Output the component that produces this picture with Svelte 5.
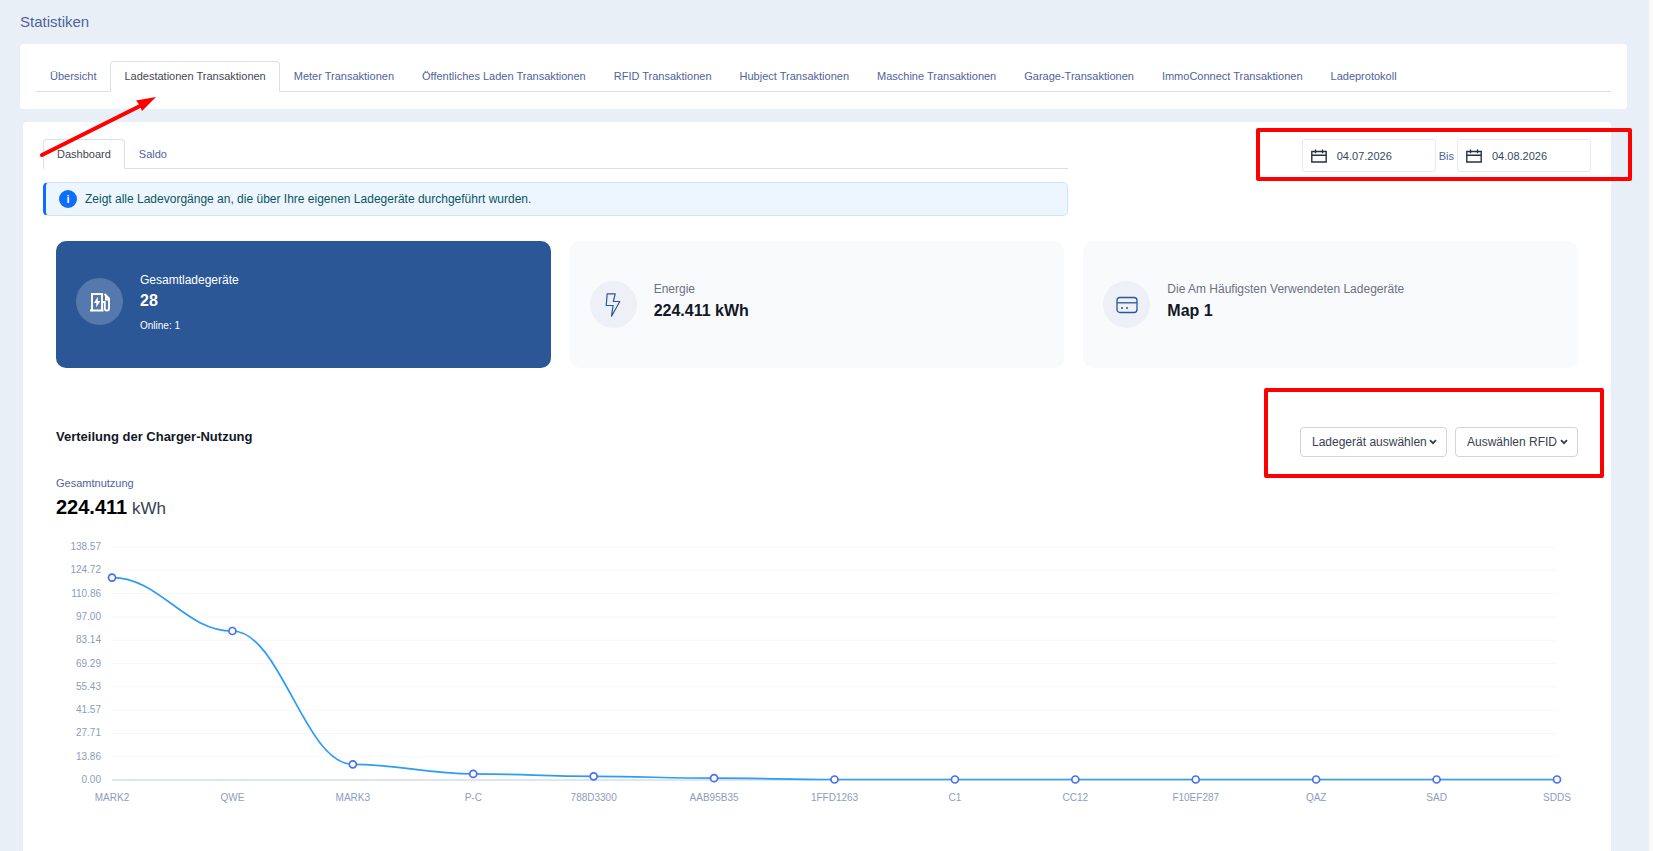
<script>
  const tabs = [
    'Übersicht', 'Ladestationen Transaktionen', 'Meter Transaktionen', 'Öffentliches Laden Transaktionen',
    'RFID Transaktionen', 'Hubject Transaktionen', 'Maschine Transaktionen', 'Garage-Transaktionen',
    'ImmoConnect Transaktionen', 'Ladeprotokoll'
  ];
  let activeTab = $state(1);
  const subTabs = ['Dashboard', 'Saldo'];
  let activeSub = $state(0);
  let from = $state('04.07.2026');
  let to = $state('04.08.2026');

  const usage = [
    ['MARK2', 120.4], ['QWE', 88.6], ['MARK3', 9.3], ['P-C', 3.6], ['788D3300', 2.2], ['AAB95B35', 1.1],
    ['1FFD1263', 0.3], ['C1', 0.3], ['CC12', 0.3], ['F10EF287', 0.3], ['QAZ', 0.3], ['SAD', 0.3], ['SDDS', 0.3]
  ];
  const ticks = ['138.57', '124.72', '110.86', '97.00', '83.14', '69.29', '55.43', '41.57', '27.71', '13.86', '0.00'];
  const max = 138.57;
  const plot = { left: 56, right: 21, top: 18, height: 233 };
  let width = $state(1522);

  const innerWidth = $derived(width - plot.left - plot.right);
  const points = $derived(usage.map(([name, v], i) => ({
    name,
    x: plot.left + (innerWidth * i) / (usage.length - 1),
    y: plot.top + plot.height * (1 - v / max)
  })));
  // Horizontal tangents at each point keep the curve free of overshoot.
  const line = $derived(points.map((p, i) => {
    if (i === 0) return `M${p.x} ${p.y}`;
    const q = points[i - 1];
    const reach = (p.x - q.x) * 0.4;
    return `C${q.x + reach} ${q.y} ${p.x - reach} ${p.y} ${p.x} ${p.y}`;
  }).join(' '));
</script>

{#snippet calendar()}
  <svg class="calendar" viewBox="0 0 16 14" fill="none" stroke="#263241" aria-hidden="true">
    <path d="M.8 2.500h14.400v10.500H.8zM.8 6.300h14.400" stroke-width="1.400" />
    <path d="M4.500.5v3.800M11.500.5v3.800" stroke-width="1.400" />
  </svg>
{/snippet}

{#snippet chevron()}
  <svg class="chevron" viewBox="0 0 8 6" fill="none" stroke="#343c4c" stroke-width="1.800" aria-hidden="true">
    <path d="M1 1.200 4 4.200 7 1.200" />
  </svg>
{/snippet}

<div class="page">
  <h1>Statistiken</h1>

  <nav class="card">
    <div class="tabs">
      {#each tabs as tab, i}
        <button class:active={i === activeTab} onclick={() => (activeTab = i)}>{tab}</button>
      {/each}
    </div>
  </nav>

  <main>
    <div class="top">
      <div class="intro">
        <div class="tabs sub">
          {#each subTabs as tab, i}
            <button class:active={i === activeSub} onclick={() => (activeSub = i)}>{tab}</button>
          {/each}
        </div>
        <div class="notice">
          <span class="info">i</span>
          <span>Zeigt alle Ladevorgänge an, die über Ihre eigenen Ladegeräte durchgeführt wurden.</span>
        </div>
      </div>
      <div class="range">
        <label class="date">{@render calendar()}<input type="text" aria-label="Von" bind:value={from} /></label>
        <label for="to">Bis</label>
        <div class="date">{@render calendar()}<input id="to" type="text" bind:value={to} /></div>
        <span class="mark mark-range"></span>
      </div>
    </div>

    <section class="stats">
      <article class="primary">
        <span class="round">
          <svg width="24" height="24" viewBox="0 0 24 24" fill="none" stroke="#fff" aria-hidden="true">
            <path d="M4 20V4h10v16M2 20.500h13.500M14 12h2.800v6.500a2 2 0 0 0 4.200 0V8.500L16.500 4M20.500 9.500h-2.500V6" stroke-width="1.900" />
            <path d="M9.800 6.800 6 13h2.300v4.500l3.900-6.500H9.800z" fill="#fff" stroke="none" />
          </svg>
        </span>
        <div>
          <p>Gesamtladegeräte</p>
          <strong>28</strong>
          <small>Online: 1</small>
        </div>
      </article>
      <article>
        <span class="round">
          <svg width="24" height="24" viewBox="0 0 24 24" fill="none" stroke="#2b5797" stroke-width="1.200" stroke-linejoin="round" aria-hidden="true">
            <path d="M6.200.8h8L12.300 8.500h6.500L10.500 23.200l1.600-10.700H5.200z" />
          </svg>
        </span>
        <div>
          <p>Energie</p>
          <strong>224.411 kWh</strong>
        </div>
      </article>
      <article>
        <span class="round">
          <svg width="24" height="24" viewBox="0 0 24 24" fill="none" stroke="#2b5797" stroke-width="1.300" aria-hidden="true">
            <rect x="2" y="4.500" width="20" height="15" rx="3" />
            <path d="M2 9.800h20" />
            <path d="M6 15h2M11 15h2" stroke-width="1.500" />
          </svg>
        </span>
        <div>
          <p>Die Am Häufigsten Verwendeten Ladegeräte</p>
          <strong>Map 1</strong>
        </div>
      </article>
    </section>

    <section class="usage">
      <header>
        <h2>Verteilung der Charger-Nutzung</h2>
        <div class="filters">
          <div class="picker">
            <select aria-label="Ladegerät"><option>Ladegerät auswählen</option></select>{@render chevron()}
          </div>
          <div class="picker">
            <select aria-label="RFID"><option>Auswählen RFID</option></select>{@render chevron()}
          </div>
          <span class="mark mark-filters"></span>
        </div>
      </header>
      <p class="caption">Gesamtnutzung</p>
      <p class="total"><strong>224.411</strong> kWh</p>

      <div class="chart" bind:clientWidth={width}>
        <svg {width} height="280" role="img" aria-label="Verteilung der Charger-Nutzung">
          {#each ticks as tick, i}
            {@const y = plot.top + (plot.height * i) / (ticks.length - 1)}
            <line x1={plot.left} x2={width - plot.right} y1={y} y2={y} class:base={i === ticks.length - 1} />
            <text x={plot.left - 11} y={y + 3} text-anchor="end">{tick}</text>
          {/each}
          <path d={line} />
          {#each points as p}
            <circle cx={p.x} cy={p.y} r="3.500" />
            <text x={p.x} y={plot.top + plot.height + 21} text-anchor="middle">{p.name}</text>
          {/each}
        </svg>
      </div>
    </section>
  </main>

  <svg class="arrow" width="120" height="66" viewBox="0 0 120 66" aria-hidden="true">
    <path d="M4 60 102 11" stroke="#f00" stroke-width="4" stroke-linecap="round" />
    <path d="M118 2 98 5.500l3.500 4.500 2.500 6z" fill="#f00" />
  </svg>
</div>

<style>
  :global(body) {
    margin: 0;
    background: #fafafa;
    font-family: 'Liberation Sans', Arial, sans-serif;
  }
  .page {
    position: relative;
    box-sizing: border-box;
    min-height: 100vh;
    margin-right: 4px;
    padding: 0 22px 0 20px;
    background: #e8eff7;
    color: #4f639c;
    font-size: 11px;
    display: flex;
    flex-direction: column;
  }
  h1, h2, p { margin: 0; font-weight: 400; }
  h1 { font-size: 15px; line-height: 44px; }
  button, input, select { font: inherit; }

  .card {
    padding: 17px 16px;
    border-radius: 4px;
    background: #fff;
  }
  .tabs {
    display: flex;
    border-bottom: 1px solid #dcdfe4;
  }
  .tabs button {
    margin-bottom: -1px;
    padding: 0 13px;
    border: 1px solid transparent;
    border-radius: 4px 4px 0 0;
    background: none;
    color: inherit;
    line-height: 29px;
    white-space: nowrap;
  }
  .tabs.sub button { line-height: 28px; }
  .tabs .active {
    border-color: #dcdfe4 #dcdfe4 #fff;
    background: #fff;
    color: #3f4752;
  }

  main {
    flex: 1;
    margin: 13px 16px 0 3px;
    padding: 17px 20px 0;
    border-radius: 4px 4px 0 0;
    background: #fff;
  }
  .top {
    display: flex;
    justify-content: space-between;
    align-items: flex-start;
  }
  .intro { width: 66.200%; }
  .notice {
    display: flex;
    align-items: center;
    gap: 8px;
    margin-top: 13px;
    padding: 7px 13px;
    border: 1px solid #cfe2ff;
    border-left: 3px solid #0d6efd;
    border-radius: 5px;
    background: #edf5fe;
    color: #0b5563;
    font-size: 12px;
    line-height: 18px;
  }
  .info {
    width: 18px;
    height: 18px;
    border-radius: 50%;
    background: #0d6efd;
    color: #fff;
    font-size: 11px;
    font-weight: 700;
    text-align: center;
  }

  .range {
    position: relative;
    display: flex;
    align-items: center;
    gap: 3px;
  }
  .date {
    box-sizing: border-box;
    display: flex;
    align-items: center;
    gap: 10px;
    width: 134px;
    height: 33px;
    padding: 0 8px;
    border: 1px solid #e6e8f2;
    border-radius: 3px;
  }
  .date input {
    min-width: 0;
    flex: 1;
    padding: 0;
    border: 0;
    background: none;
    color: #34495e;
    outline: none;
  }
  .calendar { width: 16px; height: 14px; flex: none; }

  .mark {
    position: absolute;
    border: 4px solid #f00;
    border-radius: 2px;
    pointer-events: none;
  }
  .mark-range { inset: -11px -41px -9px -46px; }
  .mark-filters { inset: -39px -26px -21px -36px; }
  .arrow {
    position: absolute;
    left: 38px;
    top: 95px;
    pointer-events: none;
  }

  .stats {
    display: grid;
    grid-template-columns: repeat(3, 1fr);
    gap: 19px;
    margin: 25px 13px 0;
  }
  article {
    box-sizing: border-box;
    display: flex;
    align-items: center;
    gap: 17px;
    min-height: 127px;
    padding: 0 20px;
    border-radius: 10px;
    background: #f9fafc;
  }
  article div { padding-bottom: 8px; }
  .round {
    display: flex;
    align-items: center;
    justify-content: center;
    width: 47px;
    height: 47px;
    border-radius: 50%;
    background: #edf0f6;
  }
  article p {
    color: #6b7280;
    font-size: 12px;
    line-height: 20px;
  }
  article strong {
    display: block;
    color: #111827;
    font-size: 16px;
    line-height: 23px;
  }
  article small {
    display: block;
    margin-top: 4px;
    font-size: 10px;
    line-height: 20px;
  }
  .primary {
    padding-bottom: 6px;
    background: #2b5797;
    color: #fff;
  }
  .primary div { padding: 3px 0 0; }
  .primary p, .primary strong { color: #fff; }
  .primary strong { line-height: 22px; }
  .primary .round { background: #5579ac; }

  .usage { margin: 59px 13px 0; }
  header {
    display: flex;
    justify-content: space-between;
    align-items: flex-start;
  }
  h2 {
    color: #111827;
    font-size: 13px;
    font-weight: 700;
    line-height: 20px;
  }
  .filters {
    position: relative;
    display: flex;
    gap: 8px;
  }
  .picker { position: relative; }
  .picker select {
    appearance: none;
    height: 30px;
    padding: 0 19px 0 11px;
    border: 1px solid #d1d5db;
    border-radius: 4px;
    background: #fff;
    color: #374151;
    font-size: 12px;
  }
  .chevron {
    position: absolute;
    right: 10px;
    top: 12px;
    width: 8px;
    height: 6px;
    pointer-events: none;
  }
  .caption { margin-top: 16px; line-height: 20px; }
  .total {
    color: #374151;
    font-size: 17px;
    line-height: 28px;
  }
  .total strong { color: #000; font-size: 20px; }

  .chart { margin-top: 6px; overflow: hidden; }
  .chart svg { display: block; }
  .chart line { stroke: #f7f7f8; }
  .chart .base { stroke: #e0e6f1; stroke-width: 2; }
  .chart text { fill: #8c9cc0; font-size: 10px; }
  .chart path { fill: none; stroke: #2d9cf7; stroke-width: 1.700; }
  .chart circle { fill: #fff; stroke: #4a6cf7; stroke-width: 1.700; }
</style>
